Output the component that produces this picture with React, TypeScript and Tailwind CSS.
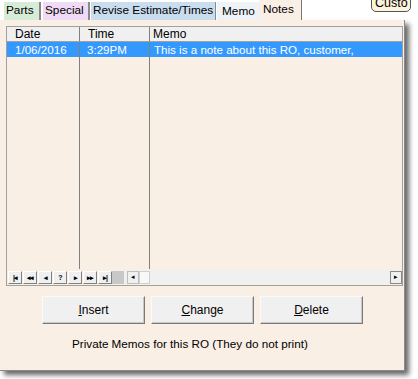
const font = { fontFamily: '"Liberation Sans", Arial, sans-serif' };

function NavBtn({ children }: { children: React.ReactNode }) {
  return (
    <div className="w-[14px] h-[13px] bg-[#f0f0f0] border border-t-white border-l-white border-b-[#808080] border-r-[#808080] flex items-center justify-center text-[7px] font-bold text-black leading-none tracking-[-1px]">
      {children}
    </div>
  );
}

function Btn({ first, rest }: { first: string; rest: string }) {
  return (
    <button className="w-[103px] h-[28px] bg-[#f0f0f0] border border-t-[#fafafa] border-l-[#fafafa] border-b-[#7a7a7a] border-r-[#7a7a7a] shadow-[inset_-1px_-1px_0_#c8c8c8] text-[12px] text-black">
      <span className="underline">{first}</span>
      {rest}
    </button>
  );
}

export default function App() {
  return (
    <div className="w-[418px] h-[379px] bg-white relative overflow-hidden" style={font}>
      {/* tab strip */}
      <div className="flex items-end h-[20px] pl-[4px] text-[11.8px] text-black">
        <div className="h-[18px] w-[37px] pl-[2px] bg-[#d7ecd6] border-r-2 border-[#8a8a8a] flex items-center">Parts</div>
        <div className="h-[18px] w-[47px] ml-[2px] pl-[2px] bg-[#f0dbf6] border-r-2 border-[#8a8a8a] flex items-center">Special</div>
        <div className="h-[18px] w-[125px] ml-[1px] pl-[2px] bg-[#c9ddef] border-r border-[#8a8a8a] flex items-center whitespace-nowrap">Revise Estimate/Times</div>
        <div className="h-[18px] w-[42px] ml-[1px] pl-[5px] bg-[#eef3f8] flex items-center pt-[2px]">Memo</div>
        <div className="h-[20px] w-[43px] pl-[4px] bg-[#faefe5] border-r border-[#777] pt-[1px]">Notes</div>
      </div>
      <div className="absolute left-[371px] top-[-6px] w-[40px] h-[18px] bg-[#fbf3dc] border border-[#555] rounded-[5px] text-[12.5px] leading-[17px] pl-[3px] text-black overflow-hidden whitespace-nowrap">
        Custo
      </div>

      {/* panel */}
      <div className="w-[405px] h-[351px] bg-[#faefe5] border-r border-b border-[#8a8a8a] shadow-[4px_4px_5px_rgba(0,0,0,0.6)] pt-[6px] pl-[6px]">
        <div className="w-[397px] h-[260px] border border-[#a0a0a0] flex flex-col">
          <div className="flex-1 relative">
            <div className="flex h-[15px] bg-[#f0f0f0] border-b border-[#a0a0a0] text-[12px] leading-[15px] text-black">
              <div className="w-[73px] pl-[8px] border-r border-[#808080]">Date</div>
              <div className="w-[70px] pl-[8px] border-r border-[#808080]">Time</div>
              <div className="flex-1 pl-[3px]">Memo</div>
            </div>
            <div className="flex h-[15px] bg-[#3399ff] text-[11.6px] leading-[15px] text-white">
              <div className="w-[73px] pl-[8px] border-r border-[#808080]">1/06/2016</div>
              <div className="w-[70px] pl-[7px] border-r border-[#808080]">3:29PM</div>
              <div className="flex-1 pl-[4px]">This is a note about this RO, customer,</div>
            </div>
            <div className="flex h-[212px]">
              <div className="w-[73px] border-r border-[#808080]" />
              <div className="w-[70px] border-r border-[#808080]" />
              <div className="flex-1" />
            </div>
          </div>
          <div className="flex items-center h-[15px] pl-[1px] pb-[1px]">
            <div className="flex gap-[1px]">
              <NavBtn>|◂</NavBtn>
              <NavBtn>◂◂</NavBtn>
              <NavBtn>◂</NavBtn>
              <NavBtn>?</NavBtn>
              <NavBtn>▸</NavBtn>
              <NavBtn>▸▸</NavBtn>
              <NavBtn>▸|</NavBtn>
            </div>
            <div className="w-[12px] h-[13px] bg-[#c8c8c8]" />
            <div className="flex-1 h-[14px] bg-[#f0f0f0] flex items-center">
              <div className="w-[12px] h-[13px] border border-[#bdbdbd] bg-[#f0f0f0] flex items-center justify-center text-[7px] ml-[3px]">◂</div>
              <div className="w-[11px] h-[13px] bg-[#f8f8f8] border border-[#d0d0d0]" />
              <div className="flex-1" />
              <div className="w-[12px] h-[13px] border border-[#8a8a8a] bg-[#f0f0f0] flex items-center justify-center text-[7px]">▸</div>
            </div>
          </div>
        </div>

        <div className="flex gap-[6px] pl-[36px] mt-[10px]">
          <Btn first="I" rest="nsert" />
          <Btn first="C" rest="hange" />
          <Btn first="D" rest="elete" />
        </div>
        <div className="pl-[66px] mt-[11px] text-[11.7px] text-black">Private Memos for this RO (They do not print)</div>
      </div>
    </div>
  );
}
